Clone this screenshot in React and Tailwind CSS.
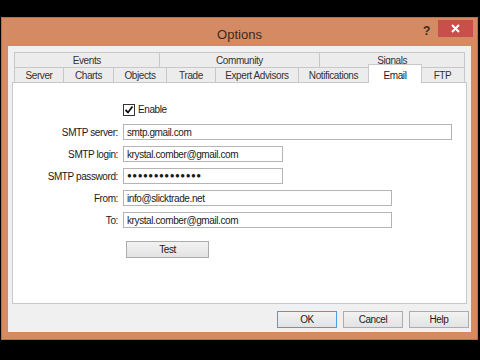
import React from 'react';

const font = { fontFamily: '"Liberation Sans", Arial, sans-serif' };

function Field({ label, value, width, password }) {
    return (
        <div className="flex items-center h-[16px]">
            <div className="w-[110px] text-right pr-[5px] text-[10px] tracking-[-0.4px] text-[#1a1a1a]">{label}</div>
            <div
                className={`h-[16px] border border-[#b4b4b4] bg-white flex items-center px-[3px] text-[10px] tracking-[-0.4px] text-[#1a1a1a] ${width}`}
            >
                {password ? (
                    <span className="text-[8px] tracking-[0.5px] leading-none">●●●●●●●●●●●●●●</span>
                ) : (
                    value
                )}
            </div>
        </div>
    );
}

function Tab({ label, width, selected }) {
    if (selected) {
        return (
            <div
                className={`${width} h-[19px] -mt-[3px] -mx-[1px] bg-white border border-b-0 border-[#c8c8c8] flex items-start justify-center pt-[3px] text-[10px] tracking-[-0.4px] text-[#1a1a1a] relative z-10`}
            >
                {label}
            </div>
        );
    }
    return (
        <div
            className={`${width} h-[16px] bg-[#ececec] border border-[#c8c8c8] -ml-[1px] first:ml-0 flex items-center justify-center text-[10px] tracking-[-0.4px] text-[#333]`}
        >
            {label}
        </div>
    );
}

function Button({ label, primary }) {
    return (
        <div
            className={`w-[60px] h-[17px] flex items-center justify-center text-[10px] tracking-[-0.4px] text-[#1a1a1a] bg-gradient-to-b from-[#f2f2f2] to-[#e3e3e3] border ${
                primary ? 'border-[#4d9be0]' : 'border-[#acacac]'
            }`}
        >
            {label}
        </div>
    );
}

export default function App() {
    return (
        <div className="w-[480px] h-[360px] bg-black overflow-hidden" style={font}>
            <div className="h-[17px]" />
            {/* Dialog window */}
            <div className="ml-[1px] w-[477px] h-[323px] bg-[#d48a62] border border-[#b8704a] flex flex-col">
                {/* Title bar */}
                <div className="h-[28px] flex items-start relative">
                    <div className="flex-1 text-center text-[13px] text-[#3b2a20] pt-[7px]">Options</div>
                    <div className="absolute left-[421px] top-[4px] text-[12px] font-bold text-[#3b2a20]">?</div>
                    <div className="absolute left-[436px] top-[2px] w-[35px] h-[17px] bg-[#c9504a] flex items-center justify-center">
                        <svg width="9" height="9" viewBox="0 0 9 9">
                            <path d="M1 1 L8 8 M8 1 L1 8" stroke="white" strokeWidth="2" />
                        </svg>
                    </div>
                </div>
                {/* Client area */}
                <div className="mx-[6px] h-[286px] bg-[#f0f0f0] flex flex-col">
                    {/* Tabs */}
                    <div className="ml-[6px] mt-[6px] w-[451px] flex flex-col">
                        <div className="flex">
                            <Tab label="Events" width="w-[146px]" />
                            <Tab label="Community" width="w-[162px]" />
                            <Tab label="Signals" width="w-[146px]" />
                        </div>
                        <div className="flex -mt-[1px]">
                            <Tab label="Server" width="w-[50px]" />
                            <Tab label="Charts" width="w-[51px]" />
                            <Tab label="Objects" width="w-[54px]" />
                            <Tab label="Trade" width="w-[50px]" />
                            <Tab label="Expert Advisors" width="w-[84px]" />
                            <Tab label="Notifications" width="w-[71px]" />
                            <Tab label="Email" width="w-[54px]" selected />
                            <Tab label="FTP" width="w-[45px]" />
                        </div>
                    </div>
                    {/* Tab panel */}
                    <div className="ml-[4px] -mt-[1px] w-[455px] h-[222px] bg-white border border-[#c8c8c8] flex flex-col">
                        <div className="mt-[20px] ml-[110px] flex items-center gap-[3px] h-[13px]">
                            <div className="w-[12px] h-[12px] border border-[#333] bg-white flex items-center justify-center">
                                <svg width="10" height="10" viewBox="0 0 10 10">
                                    <path d="M1.5 5 L4 7.5 L8.5 1.5" stroke="#111" strokeWidth="1.8" fill="none" />
                                </svg>
                            </div>
                            <span className="text-[10px] tracking-[-0.4px] text-[#1a1a1a]">Enable</span>
                        </div>
                        <div className="mt-[8px] flex flex-col gap-[6px]">
                            <Field label="SMTP server:" value="smtp.gmail.com" width="w-[329px]" />
                            <Field label="SMTP login:" value="krystal.comber@gmail.com" width="w-[160px]" />
                            <Field label="SMTP password:" password width="w-[160px]" />
                            <Field label="From:" value="info@slicktrade.net" width="w-[269px]" />
                            <Field label="To:" value="krystal.comber@gmail.com" width="w-[269px]" />
                        </div>
                        <div className="mt-[13px] ml-[113px] w-[83px] h-[17px] flex items-center justify-center text-[10px] tracking-[-0.4px] text-[#1a1a1a] bg-gradient-to-b from-[#f2f2f2] to-[#e3e3e3] border border-[#acacac]">
                            Test
                        </div>
                    </div>
                    {/* Buttons */}
                    <div className="mt-[7px] pr-[2px] flex justify-end gap-[6px]">
                        <Button label="OK" primary />
                        <Button label="Cancel" />
                        <Button label="Help" />
                    </div>
                </div>
            </div>
        </div>
    );
}
